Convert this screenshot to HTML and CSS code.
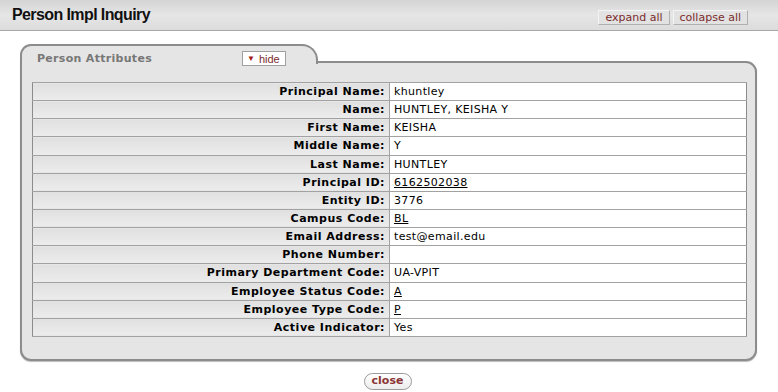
FILE: index.html
```html
<!DOCTYPE html>
<html lang="en">
<head>
    <meta charset="UTF-8">
    <title>Person Impl Inquiry</title>
    <link rel="stylesheet" href="styles.css">
</head>
<body>
    <!-- page header -->
    <div class="header">
        <h1 class="page-title">Person Impl Inquiry</h1>
        <div class="header-buttons">
            <a href="#" class="header-btn">expand all</a>
            <a href="#" class="header-btn">collapse all</a>
        </div>
    </div>

    <div class="main">
        <!-- person attributes tab -->
        <div class="tab">
            <span class="tab-title">Person Attributes</span>
            <a href="#" class="hide-btn"><span class="arrow">&#9660;</span>hide</a>
        </div>
        <div class="panel">
            <table class="attr-table">
                <tr><th>Principal Name:</th><td>khuntley</td></tr>
                <tr><th>Name:</th><td>HUNTLEY, KEISHA Y</td></tr>
                <tr><th>First Name:</th><td>KEISHA</td></tr>
                <tr><th>Middle Name:</th><td>Y</td></tr>
                <tr><th>Last Name:</th><td>HUNTLEY</td></tr>
                <tr><th>Principal ID:</th><td><a href="#">6162502038</a></td></tr>
                <tr><th>Entity ID:</th><td>3776</td></tr>
                <tr><th>Campus Code:</th><td><a href="#">BL</a></td></tr>
                <tr><th>Email Address:</th><td>test@email.edu</td></tr>
                <tr><th>Phone Number:</th><td></td></tr>
                <tr><th>Primary Department Code:</th><td>UA-VPIT</td></tr>
                <tr><th>Employee Status Code:</th><td><a href="#">A</a></td></tr>
                <tr><th>Employee Type Code:</th><td><a href="#">P</a></td></tr>
                <tr><th>Active Indicator:</th><td>Yes</td></tr>
            </table>
        </div>

        <div class="actions">
            <a href="#" class="close-btn">close</a>
        </div>
    </div>
</body>
</html>
```

FILE: styles.css
```css
* {
    box-sizing: border-box;
}

body {
    margin: 0;
    background: #ffffff;
    font-family: "DejaVu Sans", Verdana, sans-serif;
    font-size: 11px;
    color: #000;
}

a {
    color: inherit;
}

/* header */
.header {
    height: 31px;
    display: flex;
    align-items: center;
    justify-content: space-between;
    padding: 0 30px 0 12px;
    background: linear-gradient(180deg, #d4d4d4 0%, #e6e6e6 50%, #dcdcdc 100%);
    border-bottom: 1px solid #a8a8a8;
}

.page-title {
    margin: 0;
    font-family: "Liberation Sans", Arial, sans-serif;
    font-size: 16px;
    letter-spacing: -0.6px;
    font-weight: bold;
    color: #111;
}

.header-buttons {
    display: flex;
    gap: 3px;
    margin-top: 4px;
}

.header-btn {
    display: block;
    height: 15px;
    line-height: 13px;
    padding: 0 6px;
    background: #e2e2e2;
    border: 1px solid #f4f4f4;
    border-right-color: #b0b0b0;
    border-bottom-color: #b0b0b0;
    color: #7a2c2c;
    text-decoration: none;
    font-size: 11px;
}

/* panel */
.main {
    padding: 13px 21px 0 20px;
}

.tab {
    position: relative;
    z-index: 1;
    width: 298px;
    height: 20px;
    display: flex;
    align-items: center;
    padding: 7px 0 0 15px;
    margin-bottom: -3px;
    background: #e5e5e5;
    border: 2px solid #8c8c8c;
    border-bottom: none;
    border-radius: 11px 16px 0 0;
}

.tab-title {
    width: 205px;
    font-weight: bold;
    color: #777;
    font-size: 11px;
    letter-spacing: 0.3px;
}

.hide-btn {
    display: flex;
    align-items: center;
    height: 15px;
    padding: 0 5px 0 4px;
    background: #fff;
    border: 1px solid #a0a0a0;
    color: #7a2c2c;
    text-decoration: none;
    font-family: "Liberation Sans", Arial, sans-serif;
    font-size: 11px;
}

.arrow {
    color: #a41818;
    font-size: 8px;
    margin-right: 4px;
}

.panel {
    background: #e5e5e5;
    border: 2px solid #8c8c8c;
    border-radius: 0 11px 11px 11px;
    padding: 19px 8px 22px 10px;
    box-shadow: 0 1px 1px #bcbcbc;
}

.attr-table {
    width: 100%;
    border-collapse: collapse;
    border: 1px solid #8c8c8c;
}

.attr-table th,
.attr-table td {
    height: 18.15px;
    padding: 0 4px;
    border-top: 1px solid #a2a2a2;
    border-bottom: 1px solid #a2a2a2;
    white-space: nowrap;
}

.attr-table th {
    width: 357px;
    text-align: right;
    font-weight: bold;
    letter-spacing: 0.5px;
    background: linear-gradient(180deg, #e0e0e0 0%, #ececec 100%);
    border-right: 1px solid #a2a2a2;
}

.attr-table td {
    background: #fff;
    text-align: left;
    letter-spacing: 0.35px;
}

.attr-table td a {
    color: #000;
}

/* bottom actions */
.actions {
    display: flex;
    justify-content: center;
    padding-top: 12px;
    padding-right: 2px;
}

.close-btn {
    display: block;
    width: 48px;
    height: 17px;
    line-height: 14px;
    text-align: center;
    border: 1px solid #9a9a9a;
    border-radius: 9px;
    background: linear-gradient(180deg, #ffffff 0%, #ececec 100%);
    color: #8b3434;
    font-weight: bold;
    text-decoration: none;
    font-size: 11px;
}
```
